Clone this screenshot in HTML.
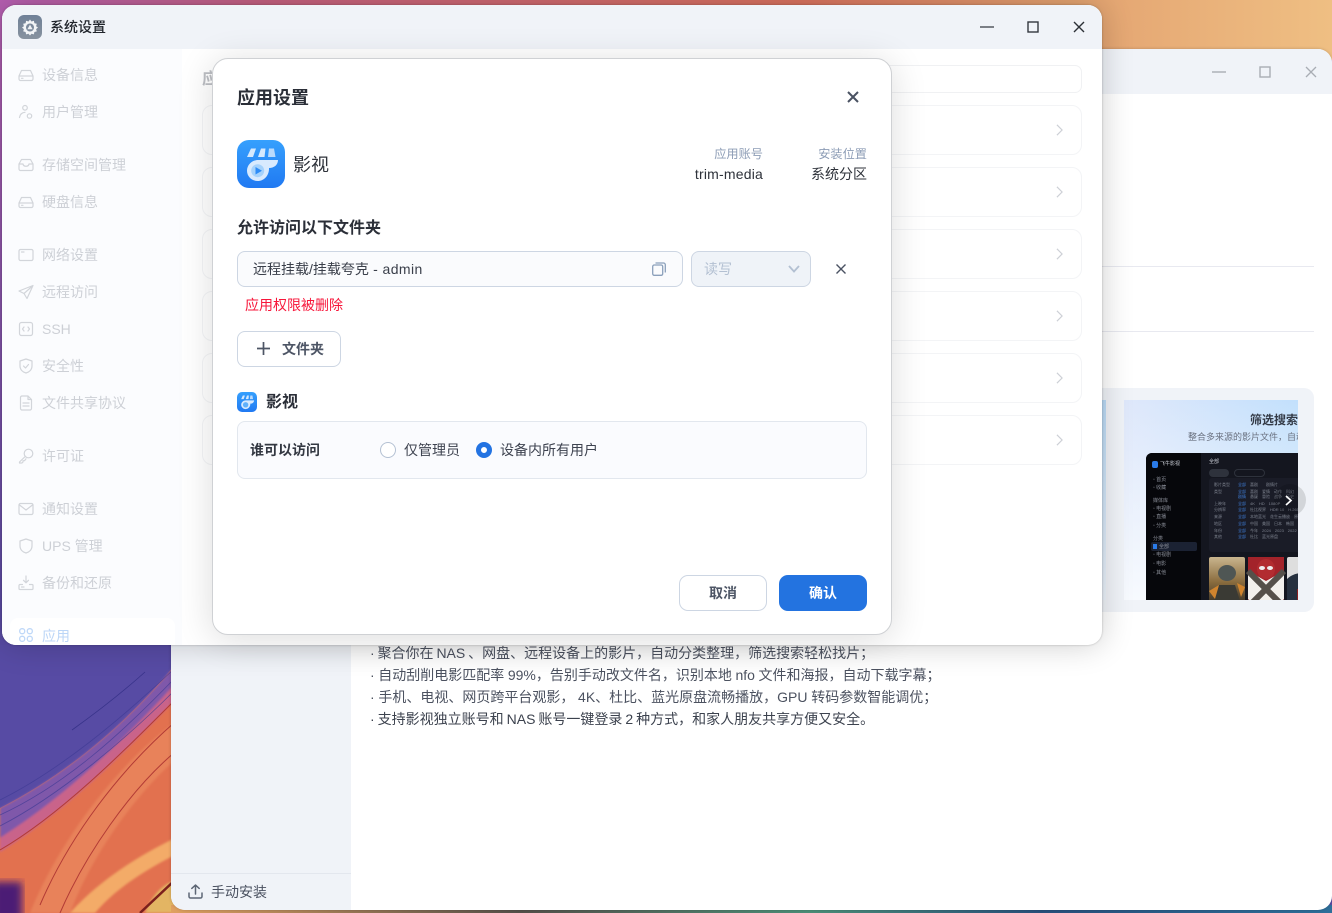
<!DOCTYPE html>
<html lang="zh"><head><meta charset="utf-8"><title>系统设置</title>
<style>
*{box-sizing:border-box;margin:0;padding:0}
html,body{width:1332px;height:913px;overflow:hidden;background:#574ba2;font-family:"Liberation Sans","Noto Sans CJK SC",sans-serif;font-size:14px}
.a{position:absolute}
.t{position:absolute;white-space:nowrap;line-height:20px;height:20px;margin-top:1px}
svg{position:absolute;overflow:visible}
.s{left:42px;color:#cdd0d6;font-size:14px}
.si{left:18px;width:16px;height:16px;fill:none;stroke:#d2d5da;stroke-width:1.2;stroke-linecap:round;stroke-linejoin:round}
.row{position:absolute;left:200px;width:880px;height:50px;border:1px solid #f3f4f6;border-radius:10px;background:#fff}
.chev{width:7px;height:12px;left:853px;top:18px;fill:none;stroke:#cdd0d6;stroke-width:1.4}
.b{font-weight:700}
.l{position:absolute;white-space:nowrap;font-size:5px;line-height:8px;color:#8a8e98}
.f{position:absolute;white-space:nowrap;font-size:4px;line-height:6px;color:#7f8490}
.fb{color:#3f7ed8}
</style></head><body>
<svg class="a" style="left:0;top:0" width="1332" height="913" viewBox="0 0 1332 913">
<defs>
<linearGradient id="top" x1="0" x2="1" y1="0" y2="0"><stop offset="0" stop-color="#b55fb0"/><stop offset=".2" stop-color="#c4607f"/><stop offset=".6" stop-color="#d9725f"/><stop offset=".8" stop-color="#e3a270"/><stop offset="1" stop-color="#efbf83"/></linearGradient>
<linearGradient id="lft" x1="0" x2="0" y1="0" y2="1"><stop offset="0" stop-color="#b55fb0"/><stop offset="1" stop-color="#564aa3"/></linearGradient>
<linearGradient id="btm" x1="0" x2="1" y1="0" y2="0"><stop offset="0" stop-color="#e0a060"/><stop offset=".3" stop-color="#55504a"/><stop offset=".55" stop-color="#4c8f78"/><stop offset=".75" stop-color="#28507c"/><stop offset="1" stop-color="#2e6f9a"/></linearGradient>
<filter id="bl"><feGaussianBlur stdDeviation="1"/></filter>
<filter id="bl2"><feGaussianBlur stdDeviation="4"/></filter>
</defs>
<rect width="1332" height="60" fill="url(#top)"/>
<rect y="0" width="12" height="650" fill="url(#lft)"/>
<g>
<rect x="0" y="645" width="175" height="268" fill="#e2714f"/>
<path d="M0 645H175V665C125 725 65 775 0 808Z" fill="#574ba4"/>
<g filter="url(#bl)">
<path d="M0 808C65 775 125 725 175 665V684C120 745 60 800 0 838Z" fill="#7f58aa"/>
<path d="M0 838C60 800 120 745 175 684V700C120 758 60 815 0 852Z" fill="#c9638a"/>
<path d="M30 913C55 850 110 770 175 722V760C130 800 90 860 70 913Z" fill="#e8825a"/>
<path d="M70 913C95 885 130 860 175 838V855C135 875 110 895 95 913Z" fill="#f3ab68"/>
<path d="M145 913C152 895 162 885 175 880V913Z" fill="#e3b564"/>
</g>
<path d="M0 800C60 770 120 720 175 668M0 815C65 785 120 735 175 678M0 826C60 795 125 740 175 690" stroke="#3f3a94" stroke-width=".8" fill="none" opacity=".7"/>
<path d="M72 730C100 710 125 690 145 672" stroke="#38338a" stroke-width=".8" fill="none"/>
<path d="M140 913L175 880" stroke="#7c1f1c" stroke-width="2.5" fill="none"/>
<path d="M0 850C60 815 120 755 175 700M40 905C70 835 120 770 175 722M60 913C85 855 130 790 175 752" stroke="#b23a35" fill="none" stroke-width="1"/>
<rect x="-8" y="882" width="30" height="40" fill="#4b1f74" filter="url(#bl2)"/>
</g>
<rect x="171" y="905" width="1161" height="8" fill="url(#btm)"/>
</svg>

<!-- back window -->
<div class="a" style="left:171px;top:49px;width:1161px;height:861px;background:#fff;border-radius:14px;overflow:hidden;box-shadow:0 0 3px rgba(0,0,0,.2)">
  <div class="a" style="left:0;top:0;width:1161px;height:45px;background:#f0f3f8"></div>
  <div class="a" style="left:0;top:45px;width:180px;height:816px;background:#f0f3f8"></div>
  <div class="a" style="left:0;top:824px;width:180px;height:1px;background:#e3e7ee"></div>
  <div class="a" style="left:700px;top:217px;width:443px;height:1px;background:#e8e9f0"></div>
  <div class="a" style="left:700px;top:282px;width:443px;height:1px;background:#e8e9f0"></div>
</div>
<svg style="left:1212px;top:65px;width:14px;height:14px" fill="none" stroke="#a9adb4" stroke-width="1.4"><path d="M0 7H14"/></svg>
<svg style="left:1260px;top:67px;width:10px;height:10px" fill="none" stroke="#a9adb4" stroke-width="1.4"><rect x="0" y="0" width="10" height="10"/></svg>
<svg style="left:1306px;top:67px;width:10px;height:10px" fill="none" stroke="#a9adb4" stroke-width="1.3"><path d="M0 0L10 10M10 0L0 10"/></svg>
<svg style="left:188px;top:884px;width:15px;height:15px" fill="none" stroke="#5d6675" stroke-width="1.5" stroke-linecap="round" stroke-linejoin="round"><path d="M7.5 10V1M3.8 4.4L7.5 1L11.2 4.4M1 9V12.5A1.5 1.5 0 0 0 2.5 14H12.5A1.5 1.5 0 0 0 14 12.5V9"/></svg>
<div class="t" style="left:211px;top:881px;color:#4a5160">手动安装</div>
<div class="t" style="left:370px;top:642px;color:#4c5260;word-spacing:-1px">· 聚合你在 NAS 、网盘、远程设备上的影片，自动分类整理，筛选搜索轻松找片；</div>
<div class="t" style="left:370px;top:664px;color:#4c5260;word-spacing:-.3px">· 自动刮削电影匹配率 99%，告别手动改文件名，识别本地 nfo 文件和海报，自动下载字幕；</div>
<div class="t" style="left:370px;top:686px;color:#4c5260;word-spacing:-.2px">· 手机、电视、网页跨平台观影， 4K、杜比、蓝光原盘流畅播放，GPU 转码参数智能调优；</div>
<div class="t" style="left:370px;top:708px;color:#3c424e;word-spacing:-.9px">· 支持影视独立账号和 NAS 账号一键登录 2 种方式，和家人朋友共享方便又安全。</div>

<!-- carousel -->
<div class="a" style="left:1060px;top:388px;width:254px;height:224px;background:#f0f3f8;border-radius:10px;overflow:hidden">
  <div class="a" style="left:0;top:12px;width:46px;height:200px;background:linear-gradient(180deg,#bcdcf8,#eef4fc)"></div>
  <div class="a" style="left:64px;top:12px;width:174px;height:200px;overflow:hidden;background:linear-gradient(180deg,rgba(247,250,254,0) 0%,#f7fafe 100%),linear-gradient(90deg,#dfe8fb,#c2e0fc)">
    <div class="t b" style="left:126px;top:9px;font-size:12px;color:#333a46">筛选搜索</div>
    <div class="t" style="left:64px;top:26px;font-size:9px;color:#6a7180">整合多来源的影片文件，自动分类</div>
    <div class="a" style="left:22px;top:53px;width:170px;height:160px;background:#14161f;border-radius:6px 0 0 0;overflow:hidden">
      <div class="a" style="left:0;top:0;width:55px;height:160px;background:#06070b"></div>
      <div class="a" style="left:6px;top:8px;width:6px;height:7px;background:#2a7be8;border-radius:2px"></div>
      <div class="l" style="left:14px;top:7px;color:#c8ccd4">飞牛影视</div>
      <div class="l" style="left:7px;top:23px">▫ 首页</div>
      <div class="l" style="left:7px;top:31px">▫ 收藏</div>
      <div class="l" style="left:7px;top:44px">媒体库</div>
      <div class="l" style="left:7px;top:52px">▫ 电视剧</div>
      <div class="l" style="left:7px;top:60px">▫ 直播</div>
      <div class="l" style="left:7px;top:69px">▫ 分类</div>
      <div class="l" style="left:7px;top:82px">分类</div>
      <div class="a" style="left:5px;top:89px;width:46px;height:9px;background:#1b2233;border-radius:2px"></div>
      <div class="a" style="left:7px;top:91px;width:4px;height:5px;background:#2a7be8"></div>
      <div class="l" style="left:13px;top:90px">全部</div>
      <div class="l" style="left:7px;top:98px">▫ 电视剧</div>
      <div class="l" style="left:7px;top:107px">▫ 电影</div>
      <div class="l" style="left:7px;top:116px">▫ 其他</div>
      <div class="l" style="left:63px;top:5px;color:#c8ccd4">全部</div>
      <div class="a" style="left:63px;top:16px;width:20px;height:8px;background:#2e323c;border-radius:4px"></div>
      <div class="a" style="left:88px;top:16px;width:31px;height:8px;border:1px solid #2e323c;border-radius:4px"></div>
      <div class="a" style="left:63px;top:25px;width:107px;height:74px;background:#1a1c27;border-radius:3px"></div>
      <div class="f" style="left:68px;top:29px">影片类型</div><div class="f fb" style="left:92px;top:29px">全部</div><div class="f" style="left:104px;top:29px">喜剧　　剧情片</div>
      <div class="f" style="left:68px;top:36px">类型</div><div class="f fb" style="left:92px;top:36px">全部</div><div class="f" style="left:104px;top:36px">喜剧　爱情　动作　科幻</div>
      <div class="f fb" style="left:92px;top:41px">剧情</div><div class="f" style="left:104px;top:41px">悬疑　冒险　战争　历史</div>
      <div class="f" style="left:68px;top:48px">上映年</div><div class="f fb" style="left:92px;top:48px">全部</div><div class="f" style="left:104px;top:48px">4K　HD　1080P</div>
      <div class="f" style="left:68px;top:54px">分辨率</div><div class="f fb" style="left:92px;top:54px">全部</div><div class="f" style="left:104px;top:54px">杜比视界　HDR 10　H.265</div>
      <div class="f" style="left:68px;top:61px">来源</div><div class="f fb" style="left:92px;top:61px">全部</div><div class="f" style="left:104px;top:61px">本地蓝光　花生云播放　原创</div>
      <div class="f" style="left:68px;top:68px">地区</div><div class="f fb" style="left:92px;top:68px">全部</div><div class="f" style="left:104px;top:68px">中国　美国　日本　韩国</div>
      <div class="f" style="left:68px;top:75px">年份</div><div class="f fb" style="left:92px;top:75px">全部</div><div class="f" style="left:104px;top:75px">今年　2024　2023　2022</div>
      <div class="f" style="left:68px;top:81px">其他</div><div class="f fb" style="left:92px;top:81px">全部</div><div class="f" style="left:104px;top:81px">杜比　蓝光原盘</div>
      <svg style="left:63px;top:104px;width:36px;height:50px" viewBox="0 0 36 50"><defs><linearGradient id="p1" x1="0" y1="0" x2="0" y2="1"><stop offset="0" stop-color="#c9b58e"/><stop offset=".5" stop-color="#8a6c3e"/><stop offset="1" stop-color="#2e2a24"/></linearGradient></defs><rect width="36" height="50" rx="2" fill="url(#p1)"/><ellipse cx="18" cy="16" rx="9" ry="8" fill="#4f5654"/><path d="M3 50L10 28H26L33 50Z" fill="#3a3a34"/><path d="M0 34L10 28L6 42ZM36 30L28 26L32 40Z" fill="#d0842e"/></svg>
      <svg style="left:102px;top:104px;width:36px;height:50px" viewBox="0 0 36 50"><rect width="36" height="50" rx="2" fill="#f2f0ec"/><path d="M0 0H36V14L18 24L0 14Z" fill="#a3232a"/><ellipse cx="18" cy="12" rx="9" ry="10" fill="#b22c30"/><ellipse cx="14" cy="11" rx="3" ry="2" fill="#eee"/><ellipse cx="22" cy="11" rx="3" ry="2" fill="#eee"/><path d="M0 14L36 50M36 14L0 50" stroke="#55504a" stroke-width="6"/><path d="M0 42L8 50H0ZM36 42L28 50H36Z" fill="#8c1f22"/></svg>
      <svg style="left:141px;top:104px;width:30px;height:50px" viewBox="0 0 30 50"><rect width="30" height="50" rx="2" fill="#dedede"/><path d="M0 22C8 14 22 14 30 22V50H0Z" fill="#26303e"/><path d="M10 32H20V50H10Z" fill="#8a1f20"/></svg>
    </div>
  </div>
  <div class="a" style="left:214px;top:96px;width:32px;height:32px;border-radius:50%;background:rgba(0,0,0,.12)"></div>
</div>
<svg style="left:1285px;top:495px;width:7px;height:11px" fill="none" stroke="#fff" stroke-width="1.7"><path d="M1 1L6 5.5L1 10"/></svg>

<!-- front window -->
<div class="a" style="left:2px;top:5px;width:1100px;height:640px;background:#fff;border-radius:14px;overflow:hidden;box-shadow:0 0 32px rgba(0,0,0,.2),0 0 2px rgba(0,0,0,.25)">
  <div class="a" style="left:0;top:0;width:1100px;height:44px;background:#f0f3f8"></div>
  <div class="a" style="left:0;top:44px;width:180px;height:596px;background:#fbfcfe"></div>
  <div class="a" style="left:8px;top:613px;width:165px;height:40px;background:#fff;border-radius:8px"></div>
  <div class="t b" style="left:200px;top:64px;color:#bcbec3;font-size:16px">应用</div>
  <div class="a" style="left:600px;top:60px;width:480px;height:28px;border:1px solid #f0f1f3;border-radius:7px"></div>
  <div class="row" style="top:100px"><svg class="chev" viewBox="0 0 8 14"><path d="M1 1L7 7L1 13"/></svg></div>
  <div class="row" style="top:162px"><svg class="chev" viewBox="0 0 8 14"><path d="M1 1L7 7L1 13"/></svg></div>
  <div class="row" style="top:224px"><svg class="chev" viewBox="0 0 8 14"><path d="M1 1L7 7L1 13"/></svg></div>
  <div class="row" style="top:286px"><svg class="chev" viewBox="0 0 8 14"><path d="M1 1L7 7L1 13"/></svg></div>
  <div class="row" style="top:348px"><svg class="chev" viewBox="0 0 8 14"><path d="M1 1L7 7L1 13"/></svg></div>
  <div class="row" style="top:410px"><svg class="chev" viewBox="0 0 8 14"><path d="M1 1L7 7L1 13"/></svg></div>
</div>
<svg style="left:18px;top:15px;width:24px;height:24px" viewBox="0 0 24 24"><defs><linearGradient id="g" x1="0" y1="0" x2="0" y2="1"><stop offset="0" stop-color="#6f8097"/><stop offset="1" stop-color="#87929f"/></linearGradient></defs><rect width="24" height="24" rx="6" fill="url(#g)"/><path d="M12 4.5l1.5 2 2.4-.7.5 2.4 2.4.6-.7 2.4 1.9 1.3-1.9 1.6.7 2.3-2.4.6-.5 2.4-2.4-.7-1.5 1.8-1.5-1.8-2.4.7-.5-2.4-2.4-.6.7-2.3-1.9-1.6 1.9-1.3-.7-2.4 2.4-.6.5-2.4 2.4.7z" fill="#f2f4f6"/><circle cx="12" cy="12.500" r="4" fill="#7c8a9c"/><path d="M12 9.600l2.600 4.600H9.400z" fill="#eef0f3"/></svg>
<div class="t" style="left:50px;top:16px;color:#20242b;font-weight:500;font-size:14px">系统设置</div>
<svg style="left:980px;top:20px;width:14px;height:14px" fill="none" stroke="#545860" stroke-width="1.5"><path d="M0 7H14"/></svg>
<svg style="left:1028px;top:22px;width:10px;height:10px" fill="none" stroke="#33373e" stroke-width="1.4"><rect x="0" y="0" width="10" height="10"/></svg>
<svg style="left:1074px;top:22px;width:10px;height:10px" fill="none" stroke="#2c3036" stroke-width="1.4"><path d="M0 0L10 10M10 0L0 10"/></svg>

<!-- sidebar -->
<svg class="si" style="top:67px" viewBox="0 0 16 16"><path d="M1 9L3.500 3.500H12.500L15 9V12A1.500 1.500 0 0 1 13.500 13.500H2.500A1.500 1.500 0 0 1 1 12ZM1 9H15M3.500 11.300H5"/></svg><div class="t s" style="top:64px">设备信息</div>
<svg class="si" style="top:104px" viewBox="0 0 16 16"><circle cx="7" cy="3.800" r="2.300"/><path d="M1.500 13.500C2 10.500 4 8.500 7 8.300"/><circle cx="11.500" cy="12" r="2.200"/></svg><div class="t s" style="top:101px">用户管理</div>
<svg class="si" style="top:157px" viewBox="0 0 16 16"><path d="M1 7L3.500 2.500H12.500L15 7V12A1.500 1.500 0 0 1 13.500 13.500H2.500A1.500 1.500 0 0 1 1 12ZM1 7H5C5.500 10 10.500 10 11 7H15"/></svg><div class="t s" style="top:154px">存储空间管理</div>
<svg class="si" style="top:194px" viewBox="0 0 16 16"><path d="M1 9L3.500 3.500H12.500L15 9V12A1.500 1.500 0 0 1 13.500 13.500H2.500A1.500 1.500 0 0 1 1 12ZM1 9H15M3.500 11.300H5"/></svg><div class="t s" style="top:191px">硬盘信息</div>
<svg class="si" style="top:247px" viewBox="0 0 16 16"><rect x="1" y="2.500" width="14" height="11" rx="1.500"/><path d="M3.500 5H6"/></svg><div class="t s" style="top:244px">网络设置</div>
<svg class="si" style="top:284px" viewBox="0 0 16 16"><path d="M15 1.500L1 7L6 9.500L9 14.500ZM15 1.500L6 9.500"/></svg><div class="t s" style="top:281px">远程访问</div>
<svg class="si" style="top:321px" viewBox="0 0 16 16"><rect x="1.500" y="1.500" width="13" height="13" rx="2"/><path d="M6 6L4.500 8L6 10M10 6L11.500 8L10 10"/></svg><div class="t s" style="top:318px">SSH</div>
<svg class="si" style="top:358px" viewBox="0 0 16 16"><path d="M8 1L14 3V8C14 11.500 11.500 14 8 15C4.500 14 2 11.500 2 8V3ZM5.500 8L7.500 10L10.500 6.500"/></svg><div class="t s" style="top:355px">安全性</div>
<svg class="si" style="top:395px" viewBox="0 0 16 16"><path d="M2.500 2.500A1.500 1.500 0 0 1 4 1H10L13.500 4.500V13.500A1.500 1.500 0 0 1 12 15H4A1.500 1.500 0 0 1 2.500 13.500ZM10 1V4.500H13.500M5 8H11M5 11H11"/></svg><div class="t s" style="top:392px">文件共享协议</div>
<svg class="si" style="top:448px" viewBox="0 0 16 16"><circle cx="10.500" cy="5.500" r="4.300"/><path d="M7.200 8.500L1.500 14V15H4L5 14V12.700H6.500L8 10.800"/></svg><div class="t s" style="top:445px">许可证</div>
<svg class="si" style="top:501px" viewBox="0 0 16 16"><rect x="1" y="2.500" width="14" height="11" rx="1.500"/><path d="M1.500 4L8 9L14.500 4"/></svg><div class="t s" style="top:498px">通知设置</div>
<svg class="si" style="top:538px" viewBox="0 0 16 16"><path d="M8 1L14 3V8C14 11.500 11.500 14 8 15C4.500 14 2 11.500 2 8V3Z"/></svg><div class="t s" style="top:535px">UPS 管理</div>
<svg class="si" style="top:575px" viewBox="0 0 16 16"><path d="M8 1V7.500M5.500 5.300L8 7.800L10.500 5.300M4.500 9.500H2A1 1 0 0 0 1 10.500V13.500A1 1 0 0 0 2 14.500H14A1 1 0 0 0 15 13.500V10.500A1 1 0 0 0 14 9.500H11.500M3.500 12H6"/></svg><div class="t s" style="top:572px">备份和还原</div>
<div class="a" style="left:2px;top:618px;width:172px;height:27px;overflow:hidden;border-radius:0 0 0 14px">
<svg style="left:17px;top:10px;width:14px;height:14px" viewBox="0 0 14 14" fill="none" stroke="#bfd8f8" stroke-width="1.300"><rect x=".7" y=".7" width="5" height="5" rx="2.200"/><rect x="8.300" y=".7" width="5" height="5" rx="2.200"/><rect x=".7" y="8.300" width="5" height="5" rx="2.200"/><rect x="8.300" y="8.300" width="5" height="5" rx="2.200"/></svg>
<div class="t" style="left:40px;top:7px;color:#bcd6f7">应用</div>
</div>

<!-- dialog -->
<div class="a" style="left:212px;top:58px;width:680px;height:577px;background:#fff;border:1px solid #cfd1d4;border-radius:16px;box-shadow:0 4px 36px rgba(0,0,0,.14)"></div>
<div class="t b" style="left:237px;top:87px;font-size:18px;color:#2b2f38">应用设置</div>
<svg style="left:847px;top:91px;width:12px;height:12px" fill="none" stroke="#4a5262" stroke-width="2"><path d="M1 1L11 11M11 1L1 11"/></svg>

<svg style="left:237px;top:140px;width:48px;height:48px" viewBox="0 0 48 48"><defs><linearGradient id="ic" x1="0" y1="0" x2="0" y2="1"><stop offset="0" stop-color="#36a0fd"/><stop offset="1" stop-color="#2079f2"/></linearGradient></defs><rect width="48" height="48" rx="12" fill="url(#ic)"/><path d="M14 8.500H19L16 17H10Z" fill="#d5e9fd"/><path d="M24 8.500H28.500L27.500 17H21Z" fill="#d5e9fd"/><path d="M32 8.500H37L38.500 17H31Z" fill="#b9dafc"/><path d="M21 20H41C41 24.500 37.500 28 32 28C32.300 35 27.500 41 20.700 41C15 41 10 36.500 10 30.700C10 25 15 20 21 20Z" fill="#d8eafe"/><circle cx="20.700" cy="30.700" r="6.500" fill="#a5d2fc"/><path d="M18.500 27L25 30.700L18.500 34.500Z" fill="#2d8cf7"/></svg>
<div class="t" style="left:293px;top:154px;font-size:18px;color:#2f333b">影视</div>
<div class="t" style="right:569px;top:143px;font-size:12.200px;color:#8d9db6">应用账号</div>
<div class="t" style="right:569px;top:163px;font-size:14px;color:#2e323a;letter-spacing:.2px">trim-media</div>
<div class="t" style="right:465px;top:143px;font-size:12.200px;color:#8d9db6">安装位置</div>
<div class="t" style="right:465px;top:163px;font-size:14px;color:#2e323a">系统分区</div>

<div class="t b" style="left:237px;top:218px;font-size:16px;color:#2b2f38">允许访问以下文件夹</div>
<div class="a" style="left:237px;top:251px;width:446px;height:36px;background:#fafbfd;border:1px solid #cdd6e3;border-radius:8px"></div>
<div class="t" style="left:253px;top:258px;font-size:14px;color:#3a3f4a">远程挂载/挂载夸克<span style="letter-spacing:.4px"> - admin</span></div>
<svg style="left:652px;top:262px;width:14px;height:14px" viewBox="0 0 14 14" fill="none" stroke="#8ba0bb" stroke-width="1.300"><rect x=".7" y="3" width="10" height="10.300" rx="1.500"/><path d="M3.500 1H11.500A1.800 1.800 0 0 1 13.300 2.800V10.500"/></svg>
<div class="a" style="left:691px;top:251px;width:120px;height:36px;background:#eff3f8;border:1px solid #cdd6e3;border-radius:8px"></div>
<div class="t" style="left:704px;top:258px;font-size:14px;color:#b3c0d2">读写</div>
<svg style="left:788px;top:265px;width:12px;height:8px" fill="none" stroke="#b3c0d2" stroke-width="1.800"><path d="M1 1L6 6.500L11 1"/></svg>
<svg style="left:836px;top:264px;width:10px;height:10px" fill="none" stroke="#4a5262" stroke-width="1.400"><path d="M.5 .5L9.500 9.500M9.500 .5L.5 9.500"/></svg>
<div class="t" style="left:245px;top:294px;font-size:14px;color:#f7163a">应用权限被删除</div>

<div class="a" style="left:237px;top:331px;width:104px;height:36px;background:#fff;border:1px solid #cdd6e3;border-radius:8px"></div>
<svg style="left:257px;top:342px;width:13px;height:13px" fill="none" stroke="#4d5565" stroke-width="1.700"><path d="M6.500 0V13M0 6.500H13"/></svg>
<div class="t b" style="left:282px;top:338px;font-size:14px;color:#4d5565">文件夹</div>

<svg style="left:237px;top:392px;width:20px;height:20px" viewBox="0 0 48 48"><rect width="48" height="48" rx="12" fill="url(#ic)"/><path d="M14 8.500H19L16 17H10Z" fill="#d5e9fd"/><path d="M24 8.500H28.500L27.500 17H21Z" fill="#d5e9fd"/><path d="M32 8.500H37L38.500 17H31Z" fill="#b9dafc"/><path d="M21 20H41C41 24.500 37.500 28 32 28C32.300 35 27.500 41 20.700 41C15 41 10 36.500 10 30.700C10 25 15 20 21 20Z" fill="#d8eafe"/><circle cx="20.700" cy="30.700" r="6.500" fill="#5fb0fb"/></svg>
<div class="t b" style="left:266px;top:392px;font-size:16px;color:#2b2f38">影视</div>
<div class="a" style="left:237px;top:421px;width:630px;height:58px;background:#fafbfe;border:1px solid #e2e7ee;border-radius:8px"></div>
<div class="t b" style="left:250px;top:439px;font-size:14px;color:#333842">谁可以访问</div>
<div class="a" style="left:380px;top:442px;width:16px;height:16px;border-radius:50%;background:#fff;border:1px solid #b4c1d3"></div>
<div class="t" style="left:404px;top:439px;font-size:14px;color:#3e4350">仅管理员</div>
<div class="a" style="left:476px;top:442px;width:16px;height:16px;border-radius:50%;background:#fff;border:5px solid #2373e2"></div>
<div class="t" style="left:500px;top:439px;font-size:14px;color:#3e4350">设备内所有用户</div>

<div class="a" style="left:679px;top:575px;width:88px;height:36px;background:#fff;border:1px solid #cdd6e3;border-radius:9px"></div>
<div class="t b" style="left:709px;top:582px;font-size:14px;color:#4d5565">取消</div>
<div class="a" style="left:779px;top:575px;width:88px;height:36px;background:#2373e0;border-radius:9px"></div>
<div class="t b" style="left:809px;top:582px;font-size:14px;color:#fff">确认</div>
</body></html>
